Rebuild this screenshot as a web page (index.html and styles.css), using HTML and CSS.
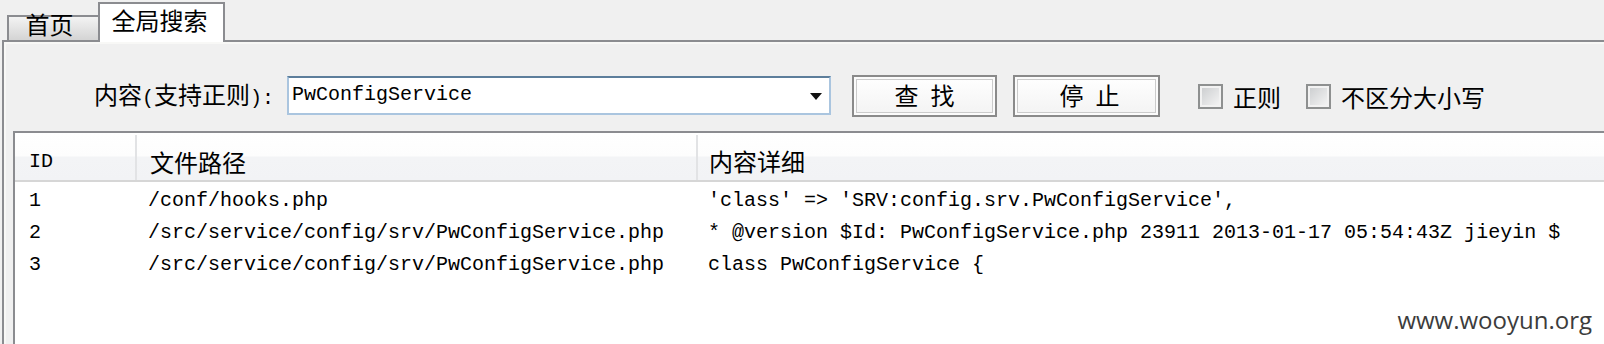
FILE: index.html
```html
<!DOCTYPE html>
<html lang="zh">
<head>
<meta charset="utf-8">
<title>全局搜索</title>
<link rel="stylesheet" href="styles.css">
</head>
<body>
<div class="app">
  <div class="tabs">
    <div class="tab"><span class="cjk">首页</span></div>
    <div class="tab tab-active"><span class="cjk">全局搜索</span></div>
  </div>
  <div class="panel">
    <div class="search">
      <div class="label"><span class="cjk">内容</span>(<span class="cjk">支持正则</span>):</div>
      <div class="combo">
        <span class="combo-text">PwConfigService</span>
        <span class="arrow"></span>
      </div>
      <button class="btn btn-find"><span class="btn-label"><span class="cjk">查</span> <span class="cjk">找</span></span></button>
      <button class="btn btn-stop"><span class="btn-label"><span class="cjk">停</span> <span class="cjk">止</span></span></button>
      <label class="check check-first"><span class="box"></span><span class="cjk">正则</span></label>
      <label class="check"><span class="box"></span><span class="cjk">不区分大小写</span></label>
    </div>
    <div class="list">
      <div class="head">
        <div class="hcell hcell-id">ID</div>
        <div class="hcell hcell-path"><span class="cjk">文件路径</span></div>
        <div class="hcell hcell-detail"><span class="cjk">内容详细</span></div>
      </div>
      <div class="row">
        <div class="cell cell-id">1</div>
        <div class="cell cell-path">/conf/hooks.php</div>
        <div class="cell cell-detail">'class' =&gt; 'SRV:config.srv.PwConfigService',</div>
      </div>
      <div class="row">
        <div class="cell cell-id">2</div>
        <div class="cell cell-path">/src/service/config/srv/PwConfigService.php</div>
        <div class="cell cell-detail">* @version $Id: PwConfigService.php 23911 2013-01-17 05:54:43Z jieyin $</div>
      </div>
      <div class="row">
        <div class="cell cell-id">3</div>
        <div class="cell cell-path">/src/service/config/srv/PwConfigService.php</div>
        <div class="cell cell-detail">class PwConfigService {</div>
      </div>
    </div>
  </div>
  <div class="watermark">www.wooyun.org</div>
</div>
</body>
</html>
```

FILE: styles.css
```css
* {
  box-sizing: border-box;
}

html, body {
  margin: 0;
  padding: 0;
}

body {
  width: 1604px;
  height: 344px;
  overflow: hidden;
  background: #f0f0f0;
  color: #000;
  font-family: "Liberation Mono", "DejaVu Sans Mono", monospace;
  font-size: 20px;
}

.cjk {
  font-family: "Noto Sans CJK SC", "Noto Sans", sans-serif;
  font-size: 24px;
}

.app {
  position: relative;
  width: 1604px;
  height: 344px;
  display: flex;
  flex-direction: column;
}

/* ---------- tabs ---------- */
.tabs {
  display: flex;
  align-items: flex-end;
  height: 40px;
  padding-left: 7px;
  flex: none;
}

.tab {
  width: 91px;
  height: 25px;
  border: 2px solid #8b8c90;
  border-bottom: none;
  border-right: none;
  background: linear-gradient(#f3f3f3, #d4d4d4);
  display: flex;
  align-items: center;
  justify-content: center;
  padding: 0 8px 10px 0;
  line-height: 1;
}

.tab-active {
  position: relative;
  z-index: 1;
  width: 127px;
  height: 40px;
  margin-bottom: -2px;
  border-right: 2px solid #8b8c90;
  background: #fff;
  padding: 0 4px 6px 0;
}

/* ---------- panel ---------- */
.panel {
  flex: 1;
  margin-left: 2px;
  border-left: 2px solid #8b8c90;
  border-top: 2px solid #8b8c90;
  background: #f0f0f0;
  box-shadow: inset 2px 2px 0 #f8f8f6;
  display: flex;
  flex-direction: column;
}

.search {
  display: flex;
  align-items: center;
  height: 89px;
  padding: 32px 0 15px 90px;
  flex: none;
}

.label {
  white-space: nowrap;
  line-height: 1;
}

.combo {
  width: 544px;
  height: 39px;
  margin-left: 13px;
  display: flex;
  align-items: center;
  background: #fff;
  border: 2px solid #aac5df;
  border-top-color: #5d7e9b;
  padding: 0 7px 0 3px;
}

.combo-text {
  flex: 1;
  line-height: 1;
}

.arrow {
  width: 0;
  height: 0;
  border-left: 6px solid transparent;
  border-right: 6px solid transparent;
  border-top: 7px solid #111;
  margin-top: 3px;
}

.btn {
  height: 42px;
  margin: 2px 0 0;
  padding: 0;
  border: 2px solid #8a8a8a;
  background: linear-gradient(#ffffff, #f3f3f3);
  box-shadow: inset 0 0 0 2px #fbfbfb, inset 0 0 0 3px #cbcbcb;
  font-family: "Liberation Mono", monospace;
  font-size: 20px;
  color: #000;
  display: flex;
  align-items: center;
  justify-content: center;
  line-height: 1;
}

.btn-label {
  white-space: pre;
}

.btn-find {
  width: 145px;
  margin-left: 21px;
}

.btn-stop {
  width: 147px;
  margin-left: 16px;
  padding-left: 6px;
}

.check {
  display: flex;
  align-items: center;
  margin-left: 25px;
  line-height: 1;
  margin-top: 3px;
}

.check-first {
  margin-left: 38px;
}

.box {
  width: 25px;
  height: 25px;
  border: 2px solid #8e9090;
  background: linear-gradient(135deg, #c9cbcd, #f7f7f7);
  box-shadow: inset 0 0 0 2px #f2f2f2;
  margin-right: 10px;
}

/* ---------- list ---------- */
.list {
  flex: 1;
  margin-left: 9px;
  border-left: 2px solid #8b8c90;
  border-top: 2px solid #8b8c90;
  background: #fff;
}

.head,
.row {
  display: grid;
  grid-template-columns: 122px 561px 1fr;
}

.head {
  height: 49px;
  border-bottom: 2px solid #d6d6d6;
  background: linear-gradient(#ffffff 0%, #fdfdfd 48%, #f3f4f6 52%, #f2f3f5 100%);
  margin-bottom: 2px;
}

.hcell {
  display: flex;
  align-items: center;
  padding-top: 9px;
  line-height: 1;
  white-space: nowrap;
}

.hcell-id {
  padding-left: 14px;
  border-right: 2px solid #e2e3e5;
  margin-top: 2px;
}

.hcell-path {
  padding-left: 13px;
  border-right: 2px solid #e2e3e5;
  margin-top: 2px;
}

.hcell-detail {
  padding-left: 11px;
}

.row {
  height: 32px;
}

.cell {
  display: flex;
  align-items: center;
  padding-top: 2px;
  white-space: pre;
  line-height: 1;
}

.cell-id {
  padding-left: 14px;
}

.cell-path {
  padding-left: 11px;
}

.cell-detail {
  padding-left: 10px;
}

/* ---------- watermark ---------- */
.watermark {
  position: absolute;
  right: 12px;
  bottom: 12px;
  font-family: "Open Sans", "Noto Sans", sans-serif;
  font-size: 24px;
  line-height: 1;
  color: #3c3c3c;
  text-shadow: 0 0 2px #fff;
}
```
